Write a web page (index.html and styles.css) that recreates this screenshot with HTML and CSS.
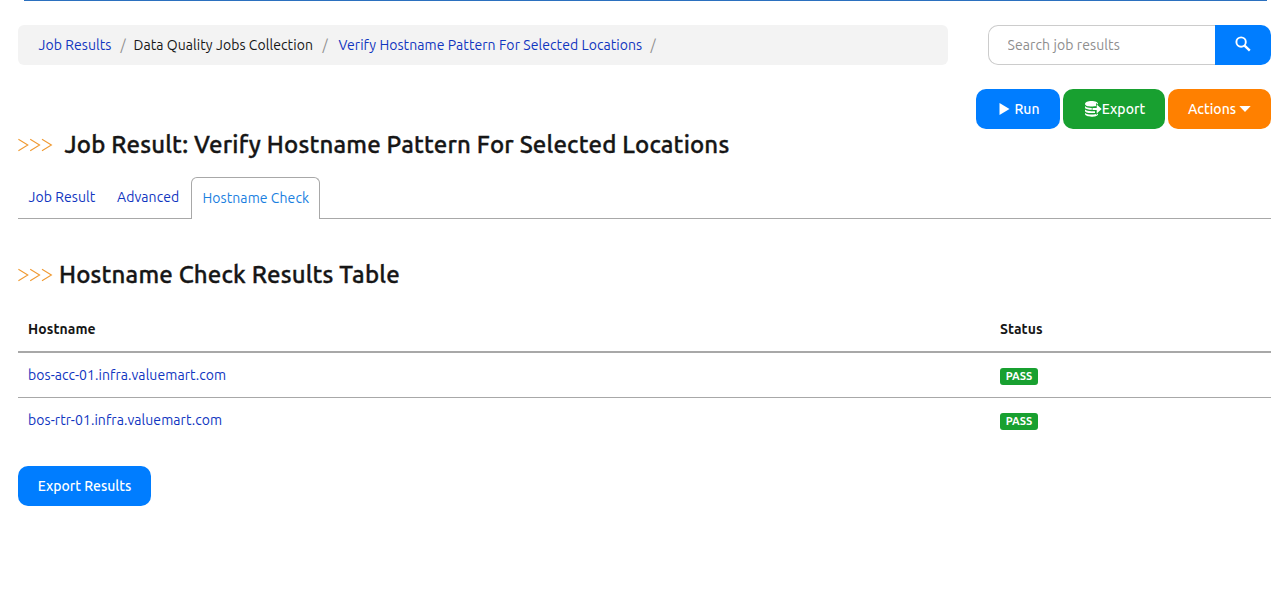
FILE: index.html
```html
<!DOCTYPE html>
<html lang="en">
<head>
<meta charset="utf-8">
<title>Job Result</title>
<link rel="stylesheet" href="styles.css">
</head>
<body>
<div class="top-rule"></div>
<main class="page">
  <header class="header">
    <nav class="breadcrumb">
      <a class="crumb crumb-home" href="#">Job Results</a><span class="slash">/</span>
      <span class="crumb crumb-group">Data Quality Jobs Collection</span><span class="slash slash-wide">/</span>
      <a class="crumb crumb-job" href="#">Verify Hostname Pattern For Selected Locations</a><span class="slash">/</span>
    </nav>
    <form class="search">
      <input class="search-input" type="text" placeholder="Search job results">
      <button class="search-button" type="button" aria-label="Search">
        <svg width="16" height="16" viewBox="0 0 16 16" fill="none" stroke="#fff"><circle cx="6.1" cy="6.1" r="4.7" stroke-width="1.9"/><path d="M9.6 9.6 L14.8 14.7" stroke-width="2.4"/></svg>
      </button>
    </form>
  </header>
  <div class="actions">
    <button class="btn btn-run" type="button"><svg width="11" height="12" viewBox="0 0 11 12" fill="#fff"><path d="M.5 0 L10.5 6 L.5 12Z"/></svg><span>Run</span></button>
    <button class="btn btn-export" type="button"><svg width="18" height="16" viewBox="0 0 18 16" fill="#fff"><path d="M1 3C1 1.300 3.800 0 7.500 0S14 1.300 14 3 11.200 5.500 7.500 5.500 1 4.700 1 3Z"/><path d="M1 5c1.200 1.500 3.500 1.900 6.200 1.900H10v1.900H7C3.600 8.800 1 7.900 1 6.600Z"/><path d="M1 8.600c1.200 1.300 3.300 1.700 6.500 1.700H11v1.700H7C3.600 12 1 11.200 1 9.900Z"/><path d="M1 12c1.400 1.100 3.600 1.500 6.500 1.500 2.700 0 5-.4 6.500-1.500v1.200c0 1.600-2.800 2.500-6.500 2.500S1 14.600 1 13.100Z"/><path class="arrow" d="M8.500 6.900H12.700V3.600L17.700 8l-5 4.400V9.100H8.500Z"/></svg><span>Export</span></button>
    <button class="btn btn-actions" type="button"><span>Actions</span><svg width="12" height="6" viewBox="0 0 12 6" fill="#fff"><path d="M.3 0H11.700L6 6Z"/></svg></button>
  </div>
  <h1 class="heading heading-main"><svg class="chevrons" width="35" height="14" viewBox="0 0 35 14"><path d="M.4 1.200 9.800 7 .4 12.800M12.200 1.200 21.600 7 12.200 12.800M24 1.200 33.400 7 24 12.800"/></svg><span>Job Result: Verify Hostname Pattern For Selected Locations</span></h1>
  <nav class="tabs">
    <a class="tab tab-result" href="#">Job Result</a>
    <a class="tab tab-advanced" href="#">Advanced</a>
    <a class="tab tab-active" href="#">Hostname Check</a>
  </nav>
  <h2 class="heading heading-sub"><svg class="chevrons" width="35" height="14" viewBox="0 0 35 14"><path d="M.4 1.200 9.800 7 .4 12.800M12.200 1.200 21.600 7 12.200 12.800M24 1.200 33.400 7 24 12.800"/></svg><span>Hostname Check Results Table</span></h2>
  <table class="results">
    <thead><tr><th>Hostname</th><th class="status">Status</th></tr></thead>
    <tbody>
      <tr><td><a href="#">bos-acc-01.infra.valuemart.com</a></td><td><span class="badge">PASS</span></td></tr>
      <tr><td><a href="#">bos-rtr-01.infra.valuemart.com</a></td><td><span class="badge">PASS</span></td></tr>
    </tbody>
  </table>
  <button class="btn btn-results" type="button">Export Results</button>
</main>
</body>
</html>
```
FILE: styles.css
```css
* { box-sizing: border-box; }
body {
  margin: 0;
  background: #fff;
  color: #161616;
  font-family: Ubuntu, "Noto Sans", sans-serif;
  font-size: 14px;
  line-height: 20px;
  letter-spacing: 0.07px;
}
a { color: #1035bf; text-decoration: none; }
button, input { font: inherit; }
svg { display: block; flex: none; }
.top-rule { height: 1px; margin: 0 20px 0 24px; background: #2b70bf; }
.page { padding: 24px 16px 0 18px; }
.header { display: flex; justify-content: space-between; }
.breadcrumb {
  display: flex;
  align-items: center;
  width: 930px;
  height: 40px;
  padding-left: 20.5px;
  border-radius: 6px;
  background: #f3f3f3;
  white-space: nowrap;
}
.crumb-home { width: 74px; }
.crumb-group { width: 181px; }
.crumb-job { width: 304px; }
.slash { width: 21px; padding-left: 8px; color: #8e8e8e; }
.slash-wide { width: 24px; }
.search { display: flex; width: 283px; height: 40px; }
.search-input {
  flex: 1;
  min-width: 0;
  padding: 0 18px 0 18.5px;
  border: 1px solid #ccc;
  border-right: 0;
  border-radius: 10px 0 0 10px;
  letter-spacing: 0.1px;
}
.search-input::placeholder { color: #8e8e8e; }
.search-button {
  display: flex;
  align-items: center;
  justify-content: center;
  width: 56px;
  padding: 0 0 2px;
  border: 0;
  border-radius: 0 10px 10px 0;
  background: #007dff;
}
.actions { display: flex; justify-content: flex-end; gap: 3px; margin-top: 24px; }
.btn {
  display: flex;
  align-items: center;
  justify-content: center;
  height: 40px;
  padding: 0;
  border: 0;
  border-radius: 10px;
  background: #007dff;
  color: #fff;
  font-weight: 500;
  white-space: nowrap;
}
.btn-run { width: 84px; gap: 4px; padding-left: 3px; }
.btn-export { width: 102px; padding-left: 1px; background: #18a030; }
.arrow { stroke: #18a030; stroke-width: 1.4; paint-order: stroke; }
.btn-actions { width: 103px; gap: 3px; background: #ff8000; }
.heading { display: flex; align-items: center; height: 30px; font-size: 24px; font-weight: 500; line-height: 30px; letter-spacing: 0.17px; white-space: nowrap; -webkit-text-stroke: 0.35px #161616; }
.heading-main { gap: 11.500px; margin: 1px 0 17px; }
.heading-sub { gap: 6px; margin: 41px 0 17px; }
.chevrons { fill: none; stroke: #f09a32; stroke-width: 1.1; }
.tabs { display: flex; height: 42px; border-bottom: 1px solid #a8a8a8; white-space: nowrap; }
.tab { padding: 10px 10px 0; }
.tab-result { width: 89px; padding-left: 10.5px; }
.tab-advanced { width: 84px; }
.tab-active { width: 129px; height: 42px; padding-left: 10.5px; border: 1px solid #a8a8a8; border-bottom: 0; border-radius: 6px 6px 0 0; background: #fff; color: #1a7fdf; }
.results { width: 100%; border-collapse: separate; border-spacing: 0; table-layout: fixed; }
.results th { height: 46px; padding: 0 10px; border-bottom: 2px solid #a8a8a8; text-align: left; font-weight: 700; }
.results .status { width: 281px; }
.results td { height: 45px; padding: 0 10px; }
.results tbody tr:first-child td { border-bottom: 1px solid #a8a8a8; }
.results tbody tr:last-child td { height: 44px; }
.badge { display: block; width: 38px; height: 17px; margin-top: 3px; border-radius: 3px; background: #18a030; color: #fff; font-size: 11px; font-weight: 700; line-height: 17px; text-align: center; letter-spacing: -0.05px; }
.btn-results { width: 133px; margin-top: 24px; }
```
